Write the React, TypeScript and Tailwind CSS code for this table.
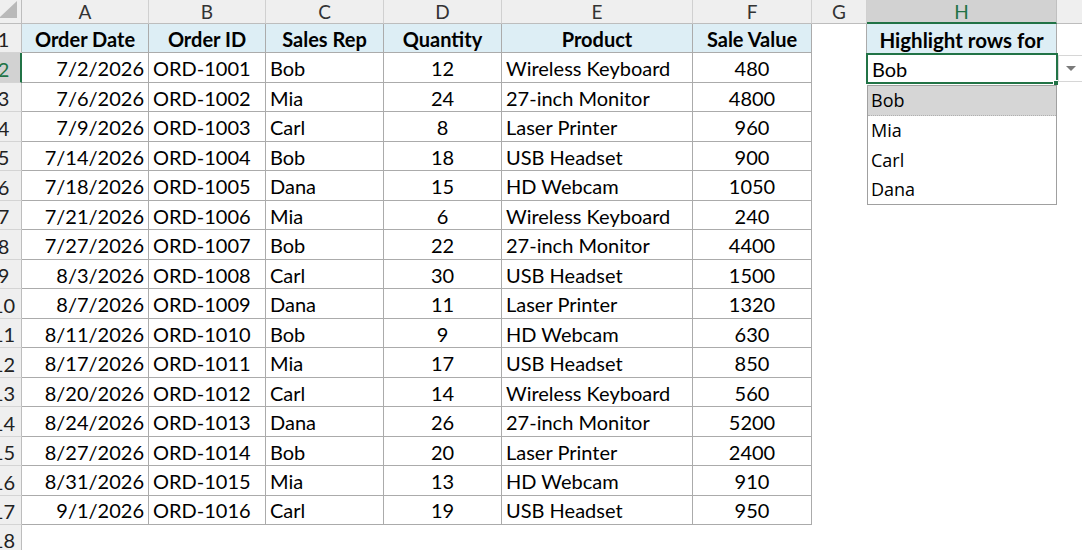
import React from "react";

const rows: [string, string, string, string, string, string][] = [
  ["7/2/2026", "ORD-1001", "Bob", "12", "Wireless Keyboard", "480"],
  ["7/6/2026", "ORD-1002", "Mia", "24", "27-inch Monitor", "4800"],
  ["7/9/2026", "ORD-1003", "Carl", "8", "Laser Printer", "960"],
  ["7/14/2026", "ORD-1004", "Bob", "18", "USB Headset", "900"],
  ["7/18/2026", "ORD-1005", "Dana", "15", "HD Webcam", "1050"],
  ["7/21/2026", "ORD-1006", "Mia", "6", "Wireless Keyboard", "240"],
  ["7/27/2026", "ORD-1007", "Bob", "22", "27-inch Monitor", "4400"],
  ["8/3/2026", "ORD-1008", "Carl", "30", "USB Headset", "1500"],
  ["8/7/2026", "ORD-1009", "Dana", "11", "Laser Printer", "1320"],
  ["8/11/2026", "ORD-1010", "Bob", "9", "HD Webcam", "630"],
  ["8/17/2026", "ORD-1011", "Mia", "17", "USB Headset", "850"],
  ["8/20/2026", "ORD-1012", "Carl", "14", "Wireless Keyboard", "560"],
  ["8/24/2026", "ORD-1013", "Dana", "26", "27-inch Monitor", "5200"],
  ["8/27/2026", "ORD-1014", "Bob", "20", "Laser Printer", "2400"],
  ["8/31/2026", "ORD-1015", "Mia", "13", "HD Webcam", "910"],
  ["9/1/2026", "ORD-1016", "Carl", "19", "USB Headset", "950"],
];

const headers = ["Order Date", "Order ID", "Sales Rep", "Quantity", "Product", "Sale Value"];
const letters = ["A", "B", "C", "D", "E", "F", "G"];
const aligns = ["justify-end pr-[4px]", "justify-start pl-[4px]", "justify-start pl-[4px]", "justify-center", "justify-start pl-[4px]", "justify-center"];

function RowHeader({ n, active }: { n: number; active?: boolean }) {
  return (
    <div
      className={
        "h-[29.47px] overflow-hidden border-b border-[#d4d4d4] " +
        (active ? "bg-[#d2d2d2] border-r-2 border-r-[#217346]" : "bg-[#efefef] border-r border-r-[#bdbdbd]")
      }
    >
      <div
        className={
          "ml-[-15px] w-[37px] h-full flex items-end justify-center pb-[3px] text-[20px] leading-none " +
          (active ? "text-[#217346]" : "text-[#222]")
        }
      >
        {n}
      </div>
    </div>
  );
}

export default function App() {
  return (
    <div
      className="relative w-[1082px] h-[550px] overflow-hidden bg-white text-black"
      style={{ fontFamily: "Lato, 'Open Sans', sans-serif" }}
    >
      <div className="grid grid-cols-[22px_127px_117px_118px_118px_191px_119px_55px_190px_1fr]">
        {/* column header row */}
        <div className="h-[24px] bg-[#efefef] border-r border-b border-[#bdbdbd] relative overflow-hidden">
          <svg width="22" height="24" className="absolute left-0 top-0">
            <polygon points="17,1 17,18 -1,18" fill="#b9b9b9" />
          </svg>
        </div>
        {letters.map((l) => (
          <div
            key={l}
            className="h-[24px] bg-[#efefef] border-r border-r-[#d0d0d0] border-b border-b-[#bdbdbd] flex items-center justify-center text-[19px] text-[#333] leading-none"
          >
            {l}
          </div>
        ))}
        <div className="h-[24px] bg-[#d2d2d2] border-r border-r-[#c0c0c0] border-b-2 border-b-[#217346] flex items-center justify-center text-[19px] text-[#217346] leading-none">
          H
        </div>
        <div className="h-[24px] bg-[#efefef] border-b border-b-[#bdbdbd]" />

        {/* row 1: headers */}
        <RowHeader n={1} />
        {headers.map((h) => (
          <div
            key={h}
            className="h-[29.47px] bg-[#ddeef5] border-r border-b border-[#ababab] flex items-end justify-center pb-[3px] text-[20px] font-bold leading-none"
          >
            {h}
          </div>
        ))}
        <div className="h-[29.47px]" />
        <div className="h-[29.47px] bg-[#ddeef5] border-l border-r border-[#ababab] flex items-end justify-center pb-[3px] text-[20.5px] font-bold leading-none ml-[-1px]">
          Highlight rows for
        </div>
        <div className="h-[29.47px]" />

        {rows.map((r, i) => (
          <React.Fragment key={i}>
            <RowHeader n={i + 2} active={i === 0} />
            {r.map((v, j) => (
              <div
                key={j}
                className={
                  "h-[29.47px] border-r border-b border-[#ababab] flex items-end pb-[3.5px] text-[20px] leading-none " +
                  aligns[j]
                }
              >
                {v}
              </div>
            ))}
            <div className="h-[29.47px]" />
            <div className="h-[29.47px] flex items-end pl-[5px] pb-[3.5px] text-[20px] leading-none">
              {i === 0 ? "Bob" : ""}
            </div>
            <div className="h-[29.47px]" />
          </React.Fragment>
        ))}
        <RowHeader n={18} />
        <div className="col-span-9 h-[29.47px]" />
      </div>

      {/* selection border on H2 */}
      <div className="absolute left-[866px] top-[53px] w-[192px] h-[31px] border-2 border-[#217346] pointer-events-none" />
      <div className="absolute left-[1053px] top-[80px] w-[6px] h-[6px] bg-[#217346] border border-white" />

      {/* dropdown arrow button */}
      <div className="absolute left-[1058px] top-[55px] w-[26px] h-[27px] bg-white border border-[#d6d6d6] flex items-center justify-center">
        <svg width="10" height="6" viewBox="0 0 10 6">
          <polygon points="0,0 10,0 5,5" fill="#7a7a7a" />
        </svg>
      </div>

      {/* dropdown list */}
      <div
        className="absolute left-[867px] top-[85px] w-[190px] h-[120px] bg-white border border-[#a0a0a0] flex flex-col"
        style={{ fontFamily: "'Open Sans', Lato, sans-serif" }}
      >
        <div className="h-[30px] bg-[#d6d6d6] border-b border-dotted border-[#b0b0b0] flex items-center pl-[3px] text-[18px] leading-none">
          Bob
        </div>
        <div className="h-[30px] flex items-center pl-[3px] text-[18px] leading-none">Mia</div>
        <div className="h-[30px] flex items-center pl-[3px] text-[18px] leading-none">Carl</div>
        <div className="h-[30px] flex items-center pl-[3px] text-[18px] leading-none">Dana</div>
      </div>
    </div>
  );
}
